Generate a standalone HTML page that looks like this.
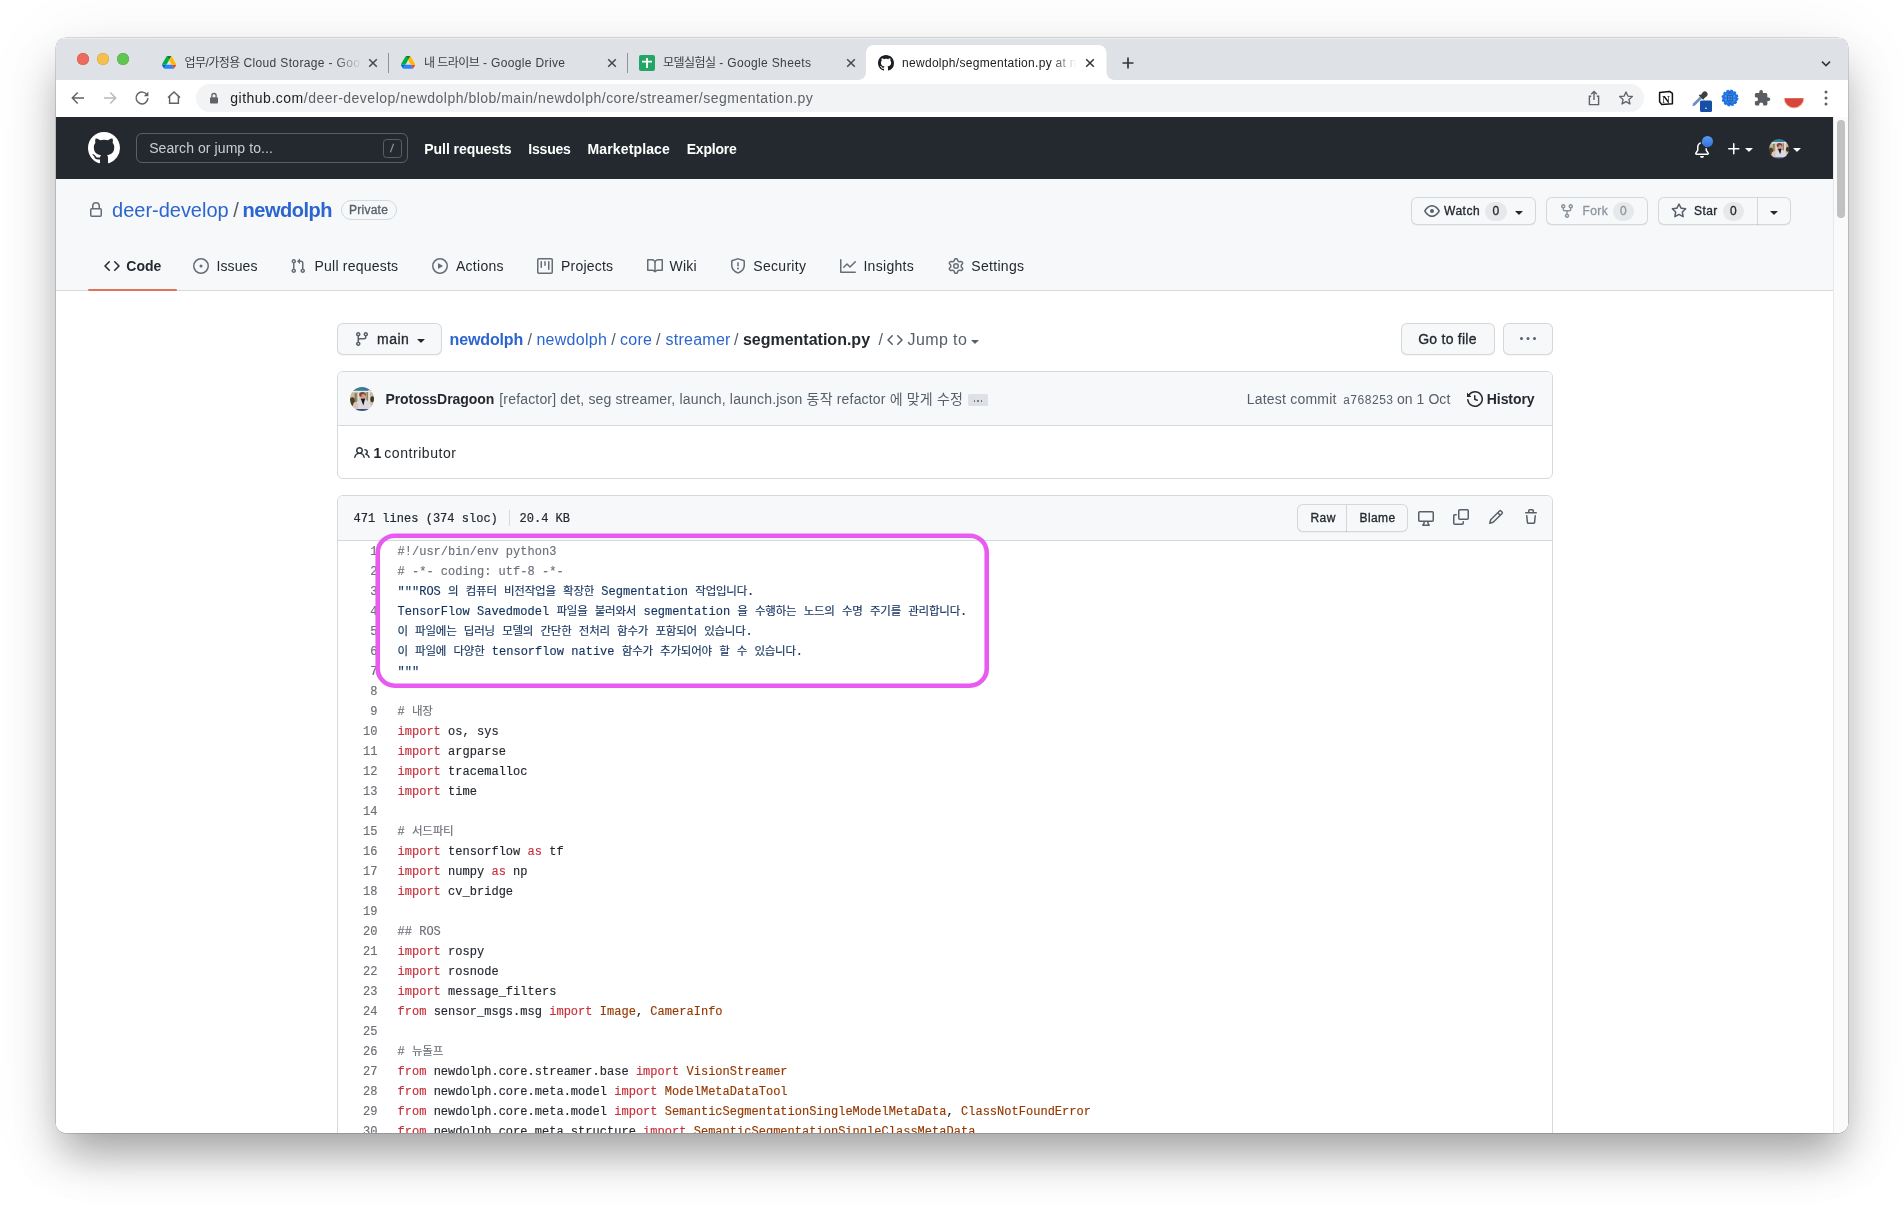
<!DOCTYPE html>
<html lang="ko"><head><meta charset="utf-8"><title>newdolph/segmentation.py at main</title>
<style>
html,body{margin:0;padding:0}
body{width:1904px;height:1207px;overflow:hidden;background:#fff;position:relative;font-family:"Liberation Sans","Noto Sans CJK KR",sans-serif}
.a{position:absolute;box-sizing:border-box;display:block}
.t{position:absolute;white-space:pre;line-height:20px;font-family:"Liberation Sans","Noto Sans CJK KR",sans-serif}
#win{position:absolute;left:56px;top:38px;width:1792px;height:1095px;border-radius:10px;overflow:hidden;background:#fff}
#shadow{position:absolute;left:56px;top:38px;width:1792px;height:1095px;border-radius:10px;
 box-shadow:0 0 0 .5px rgba(0,0,0,.28),0 26px 44px -6px rgba(0,0,0,.34),0 10px 80px rgba(0,0,0,.08)}
#abs{position:absolute;left:-56px;top:-38px;width:1904px;height:1207px;will-change:transform}
.ln{position:absolute;width:40px;text-align:right;font-family:"Liberation Mono","Noto Sans CJK KR",monospace;font-size:12px;line-height:20px;color:#6a6f76;white-space:pre;-webkit-text-stroke:.15px currentColor}
.cl{position:absolute;font-family:"Liberation Mono","Noto Sans CJK KR",monospace;font-size:12px;line-height:20px;color:#24292f;white-space:pre;letter-spacing:.022px;-webkit-text-stroke:.15px currentColor}
.h{font-size:11.5px;letter-spacing:-.22px}
.m{-webkit-text-stroke:.32px currentColor}
.k{color:#c7303c}.c{color:#6b7078}.s{color:#12315f}.v{color:#953800}
</style></head><body>
<div id="shadow"></div>
<div id="win"><div id="abs">

<div class="a" style="left:56px;top:38px;width:1792px;height:42px;background:#dee1e6;box-shadow:inset 0 1px 0 rgba(255,255,255,.45);"></div>
<div class="a" style="left:77px;top:53.2px;width:12px;height:12px;background:#ed6a5e;border-radius:6px;box-shadow:inset 0 0 0 .5px #d0574b;"></div>
<div class="a" style="left:97px;top:53.2px;width:12px;height:12px;background:#f4bf4f;border-radius:6px;box-shadow:inset 0 0 0 .5px #d6a243;"></div>
<div class="a" style="left:117px;top:53.2px;width:12px;height:12px;background:#61c554;border-radius:6px;box-shadow:inset 0 0 0 .5px #58a942;"></div>
<svg class="a" style="left:162px;top:56.3px;" width="14.2" height="12.8" viewBox="0 0 15 13.5"><path d="M1.1 11.6l.66 1.14c.14.24.34.43.57.57l2.36-4.09H0c0 .27.07.53.2.77z" fill="#0066da"/><path d="M7.5 4.33L5.14.24c-.23.14-.43.33-.57.57L.2 8.38c-.13.24-.2.5-.2.77h4.72z" fill="#00ac47"/><path d="M12.64 13.3c.23-.14.43-.33.57-.57l.27-.47 1.31-2.27c.14-.24.2-.5.2-.77h-4.72l1 1.97z" fill="#ea4335"/><path d="M7.5 4.33L9.86.24C9.63.1 9.36.03 9.08.03H5.92c-.28 0-.55.08-.78.21z" fill="#00832d"/><path d="M10.28 9.22H4.72L2.36 13.3c.23.14.5.21.78.21h8.72c.28 0 .55-.08.78-.21z" fill="#2684fc"/><path d="M12.61 4.58L10.43.81c-.14-.24-.34-.43-.57-.57L7.5 4.33l2.78 4.82h4.71c0-.27-.07-.53-.2-.77z" fill="#ffba00"/></svg>
<span class="t" style="left:184.5px;top:52.84px;font-size:12px;color:#3c4043;letter-spacing:0.36px;width:176px;overflow:hidden;-webkit-mask-image:linear-gradient(90deg,#000 150px,transparent 176px);mask-image:linear-gradient(90deg,#000 150px,transparent 176px);"><span style="letter-spacing:-.55px">업무/가정용</span> Cloud Storage - Goo</span>
<svg class="a" style="left:365px;top:55px;" width="16" height="16" viewBox="0 0 16 16"><path d="M4.2 4.2L11.8 11.8M11.8 4.2L4.2 11.8" stroke="#45494d" stroke-width="1.5" fill="none"/></svg>
<div class="a" style="left:388.2px;top:53px;width:1px;height:20px;background:#8f9296;"></div>
<svg class="a" style="left:400.5px;top:56.3px;" width="14.2" height="12.8" viewBox="0 0 15 13.5"><path d="M1.1 11.6l.66 1.14c.14.24.34.43.57.57l2.36-4.09H0c0 .27.07.53.2.77z" fill="#0066da"/><path d="M7.5 4.33L5.14.24c-.23.14-.43.33-.57.57L.2 8.38c-.13.24-.2.5-.2.77h4.72z" fill="#00ac47"/><path d="M12.64 13.3c.23-.14.43-.33.57-.57l.27-.47 1.31-2.27c.14-.24.2-.5.2-.77h-4.72l1 1.97z" fill="#ea4335"/><path d="M7.5 4.33L9.86.24C9.63.1 9.36.03 9.08.03H5.92c-.28 0-.55.08-.78.21z" fill="#00832d"/><path d="M10.28 9.22H4.72L2.36 13.3c.23.14.5.21.78.21h8.72c.28 0 .55-.08.78-.21z" fill="#2684fc"/><path d="M12.61 4.58L10.43.81c-.14-.24-.34-.43-.57-.57L7.5 4.33l2.78 4.82h4.71c0-.27-.07-.53-.2-.77z" fill="#ffba00"/></svg>
<span class="t" style="left:424px;top:52.84px;font-size:12px;color:#3c4043;letter-spacing:0.36px;"><span style="letter-spacing:-.55px">내 드라이브</span> - Google Drive</span>
<svg class="a" style="left:604px;top:55px;" width="16" height="16" viewBox="0 0 16 16"><path d="M4.2 4.2L11.8 11.8M11.8 4.2L4.2 11.8" stroke="#45494d" stroke-width="1.5" fill="none"/></svg>
<div class="a" style="left:627.2px;top:53px;width:1px;height:20px;background:#8f9296;"></div>
<svg class="a" style="left:639px;top:55px;" width="16" height="16" viewBox="0 0 16 16"><rect x="0" y="0" width="16" height="16" rx="2" fill="#23a566"/><path d="M3 6.6h10M8 3v10" stroke="#fff" stroke-width="1.8" fill="none"/><rect x="3" y="3" width="10" height="10" fill="none" stroke="#fff" stroke-width="0"/></svg>
<span class="t" style="left:663px;top:52.84px;font-size:12px;color:#3c4043;letter-spacing:0.36px;"><span style="letter-spacing:-.55px">모델실험실</span> - Google Sheets</span>
<svg class="a" style="left:843px;top:55px;" width="16" height="16" viewBox="0 0 16 16"><path d="M4.2 4.2L11.8 11.8M11.8 4.2L4.2 11.8" stroke="#45494d" stroke-width="1.5" fill="none"/></svg>
<svg class="a" style="left:858px;top:45px" width="256.5" height="35" viewBox="0 0 256.5 35"><path d="M0 35c4.4 0 8-3.6 8-8V8c0-4.4 3.6-8 8-8h224.5c4.4 0 8 3.6 8 8v19c0 4.4 3.6 8 8 8z" fill="#fff"/></svg>
<svg class="a" style="left:878px;top:55px" width="16" height="16" viewBox="0 0 16 16" ><path fill="#1b1f23" fill-rule="evenodd" d="M8 0C3.58 0 0 3.58 0 8c0 3.54 2.29 6.53 5.47 7.59.4.07.55-.17.55-.38 0-.19-.01-.82-.01-1.49-2.01.37-2.53-.49-2.69-.94-.09-.23-.48-.94-.82-1.13-.28-.15-.68-.52-.01-.53.63-.01 1.08.58 1.23.82.72 1.21 1.87.87 2.33.66.07-.52.28-.87.51-1.07-1.78-.2-3.64-.89-3.64-3.95 0-.87.31-1.59.82-2.15-.08-.2-.36-1.02.08-2.12 0 0 .67-.21 2.2.82.64-.18 1.32-.27 2-.27.68 0 1.36.09 2 .27 1.53-1.04 2.2-.82 2.2-.82.44 1.1.16 1.92.08 2.12.51.56.82 1.27.82 2.15 0 3.07-1.87 3.75-3.65 3.95.29.25.54.73.54 1.48 0 1.07-.01 1.93-.01 2.2 0 .21.15.46.55.38A8.013 8.013 0 0016 8c0-4.42-3.58-8-8-8z"/></svg>
<span class="t" style="left:902px;top:52.84px;font-size:12px;color:#202124;letter-spacing:0.3px;width:174px;overflow:hidden;-webkit-mask-image:linear-gradient(90deg,#000 150px,transparent 174px);mask-image:linear-gradient(90deg,#000 150px,transparent 174px);">newdolph/segmentation.py at m</span>
<svg class="a" style="left:1082px;top:55px;" width="16" height="16" viewBox="0 0 16 16"><path d="M4.2 4.2L11.8 11.8M11.8 4.2L4.2 11.8" stroke="#303438" stroke-width="1.5" fill="none"/></svg>
<svg class="a" style="left:1120px;top:55px;" width="16" height="16" viewBox="0 0 16 16"><path d="M8 2.5v11M2.5 8h11" stroke="#33373b" stroke-width="1.7" fill="none"/></svg>
<svg class="a" style="left:1818px;top:56px;" width="16" height="16" viewBox="0 0 16 16"><path d="M4 5.6l4 4 4-4" stroke="#33373b" stroke-width="1.6" fill="none"/></svg>
<div class="a" style="left:56px;top:80px;width:1792px;height:37px;background:#fff;"></div>
<svg class="a" style="left:68px;top:88px;" width="20" height="20" viewBox="0 0 20 20"><path d="M16 10H4.6M9.7 4.6L4.3 10l5.4 5.4" stroke="#5f6368" stroke-width="1.45" fill="none"/></svg>
<svg class="a" style="left:100px;top:88px;" width="20" height="20" viewBox="0 0 20 20"><path d="M4 10h11.4M10.3 4.6l5.4 5.4-5.4 5.4" stroke="#b6b9bd" stroke-width="1.45" fill="none"/></svg>
<svg class="a" style="left:132px;top:88px;" width="20" height="20" viewBox="0 0 20 20"><path d="M15.2 7.2A5.9 5.9 0 1 0 15.9 10" stroke="#5f6368" stroke-width="1.45" fill="none"/><path d="M16.4 3.6v4.6h-4.6z" fill="#5f6368"/></svg>
<svg class="a" style="left:164px;top:88px;" width="20" height="20" viewBox="0 0 20 20"><path d="M4 9.6L10 4l6 5.6M5.6 8.6v6.6h8.8V8.6" stroke="#5f6368" stroke-width="1.45" fill="none" stroke-linejoin="miter"/></svg>
<div class="a" style="left:196px;top:84px;width:1447.5px;height:28px;background:#f1f3f4;border-radius:14px;"></div>
<svg class="a" style="left:208px;top:91px;" width="12" height="14" viewBox="0 0 12 14"><rect x="2" y="6.2" width="8" height="6.4" rx="1" fill="#5f6368"/><path d="M3.9 6.5V4.6a2.1 2.1 0 0 1 4.2 0v1.9" stroke="#5f6368" stroke-width="1.3" fill="none"/></svg>
<span class="t" style="left:230.3px;top:87.75px;font-size:14px;color:#202124;letter-spacing:0.49px;">github.com</span>
<span class="t" style="left:303.8px;top:87.75px;font-size:14px;color:#5f6368;letter-spacing:0.49px;">/deer-develop/newdolph/blob/main/newdolph/core/streamer/segmentation.py</span>
<svg class="a" style="left:1585px;top:89px;" width="18" height="18" viewBox="0 0 18 18"><path d="M6.2 7.2H4.4v8.4h9.2V7.2h-1.8M9 11V2.6M6.2 5.2L9 2.4l2.8 2.8" stroke="#5f6368" stroke-width="1.4" fill="none"/></svg>
<svg class="a" style="left:1617px;top:89px;" width="18" height="18" viewBox="0 0 18 18"><path d="M9 2.9l1.85 4.15 4.5.45-3.400 3.050 1 4.400L9 12.650l-3.950 2.300 1-4.400-3.400-3.050 4.500-.450z" stroke="#5f6368" stroke-width="1.35" fill="none" stroke-linejoin="round"/></svg>
<svg class="a" style="left:1657px;top:89px;" width="18" height="18" viewBox="0 0 18 18"><path d="M2.6 3.4l10-1 2.8 2v10.4l-10.6.8-2.2-2.8z" fill="#fff" stroke="#111" stroke-width="1.5" stroke-linejoin="round"/><text x="5.2" y="13.6" font-family="Liberation Serif,serif" font-weight="700" font-size="10.5" fill="#111">N</text></svg>
<svg class="a" style="left:1690px;top:88px;" width="22" height="24" viewBox="0 0 22 24"><path d="M3 15.6l7-7 2 2-7 7-2.6.6z" fill="#6d8fc7"/><path d="M9.4 6.8l4.4 4.4M11 8.4l2.4-3.6a2 2 0 0 1 3 2.6L13 10z" stroke="#3c4043" stroke-width="1.8" fill="#3c4043"/><rect x="10" y="12.5" width="12" height="11.5" rx="1.5" fill="#174ea6"/><circle cx="16" cy="20.3" r=".8" fill="#fff"/></svg>
<svg class="a" style="left:1721px;top:89px;" width="18" height="18" viewBox="0 0 18 18"><circle cx="9" cy="9" r="7.6" fill="#1a73e8" stroke="#1a73e8" stroke-width="1.6" stroke-dasharray="2.4 1.6"/><circle cx="9" cy="9" r="5.6" fill="#4a90e2"/><path d="M3.4 9h11.2M9 3.4v11.2M5 5.6c2.4 1.4 5.6 1.4 8 0M5 12.4c2.4-1.4 5.6-1.4 8 0" stroke="#1a5fc4" stroke-width=".9" fill="none"/><ellipse cx="9" cy="9" rx="2.6" ry="5.6" stroke="#1a5fc4" stroke-width=".9" fill="none"/></svg>
<svg class="a" style="left:1753px;top:89px;" width="18" height="18" viewBox="0 0 18 18"><path d="M15.4 8.3h-1.1V5.4c0-.8-.7-1.5-1.500-1.500H9.900V2.800a1.800 1.800 0 0 0-3.600 0v1.100H3.400c-.8 0-1.500.7-1.500 1.500v2.800H3a2 2 0 0 1 0 4H1.900V15c0 .8.7 1.500 1.500 1.500h2.800v-1.100a2 2 0 0 1 4 0v1.100h2.700c.8 0 1.500-.7 1.500-1.500v-2.900h1.100a1.800 1.800 0 0 0 0-3.600z" fill="#5a5e63"/></svg>
<svg class="a" style="left:1783px;top:96.5px;" width="22" height="12" viewBox="0 0 22 12"><path d="M.6 1.200A10.400 10.400 0 0 0 21.400 1.200z" fill="#f0c9a8"/><path d="M1.600 1.200A9.400 9.400 0 0 0 20.400 1.200z" fill="#d9453c"/></svg>
<svg class="a" style="left:1822px;top:89px;" width="8" height="18" viewBox="0 0 8 18"><circle cx="4" cy="3" r="1.5" fill="#5f6368"/><circle cx="4" cy="9" r="1.5" fill="#5f6368"/><circle cx="4" cy="15" r="1.5" fill="#5f6368"/></svg>
<div class="a" style="left:56px;top:117px;width:1777px;height:62px;background:#24292f;"></div>
<svg class="a" style="left:88px;top:132px" width="32" height="32" viewBox="0 0 16 16" ><path fill="#fff" fill-rule="evenodd" d="M8 0C3.58 0 0 3.58 0 8c0 3.54 2.29 6.53 5.47 7.59.4.07.55-.17.55-.38 0-.19-.01-.82-.01-1.49-2.01.37-2.53-.49-2.69-.94-.09-.23-.48-.94-.82-1.13-.28-.15-.68-.52-.01-.53.63-.01 1.08.58 1.23.82.72 1.21 1.87.87 2.33.66.07-.52.28-.87.51-1.07-1.78-.2-3.64-.89-3.64-3.95 0-.87.31-1.59.82-2.15-.08-.2-.36-1.02.08-2.12 0 0 .67-.21 2.2.82.64-.18 1.32-.27 2-.27.68 0 1.36.09 2 .27 1.53-1.04 2.2-.82 2.2-.82.44 1.1.16 1.92.08 2.12.51.56.82 1.27.82 2.15 0 3.07-1.87 3.75-3.65 3.95.29.25.54.73.54 1.48 0 1.07-.01 1.93-.01 2.2 0 .21.15.46.55.38A8.013 8.013 0 0016 8c0-4.42-3.58-8-8-8z"/></svg>
<div class="a" style="left:136px;top:133px;width:272px;height:30px;border:1px solid #57606a;border-radius:6px;"></div>
<span class="t" style="left:149.2px;top:137.85px;font-size:14px;color:#c9ced4;letter-spacing:0.08px;">Search or jump to...</span>
<div class="a" style="left:382.5px;top:138.5px;width:19px;height:19px;border:1px solid #57606a;border-radius:3.5px;"></div>
<svg class="a" style="left:388px;top:142px;" width="8" height="12" viewBox="0 0 8 12"><path d="M5.6 1.800L2.400 10.200" stroke="#8c959f" stroke-width="1.1" fill="none"/></svg>
<span class="t" style="left:424.3px;top:139.05px;font-size:14px;color:#fff;font-weight:700;letter-spacing:-0.05px;">Pull requests</span>
<span class="t" style="left:528.3px;top:139.05px;font-size:14px;color:#fff;font-weight:700;letter-spacing:-0.2px;">Issues</span>
<span class="t" style="left:587.5px;top:139.05px;font-size:14px;color:#fff;font-weight:700;letter-spacing:0.14px;">Marketplace</span>
<span class="t" style="left:686.7px;top:139.05px;font-size:14px;color:#fff;font-weight:700;letter-spacing:-0.2px;">Explore</span>
<svg class="a" style="left:1694px;top:141.5px" width="16" height="16" viewBox="0 0 16 16" ><path fill="#fff" fill-rule="evenodd" d="M8 16a2 2 0 001.985-1.75c.017-.137-.097-.25-.235-.25h-3.5c-.138 0-.252.113-.235.25A2 2 0 008 16zM8 1.5A3.5 3.5 0 004.5 5v2.947c0 .346-.102.683-.294.97l-1.703 2.556a.018.018 0 00-.003.01l.001.006c0 .002.002.004.004.006a.017.017 0 00.006.004l.007.001h10.964l.007-.001a.016.016 0 00.006-.004.016.016 0 00.004-.006l.001-.007a.017.017 0 00-.003-.01l-1.703-2.554a1.75 1.75 0 01-.294-.97V5A3.5 3.5 0 008 1.5zM3 5a5 5 0 0110 0v2.947c0 .05.015.098.042.139l1.703 2.555A1.518 1.518 0 0113.482 13H2.518a1.518 1.518 0 01-1.263-2.36l1.703-2.554A.25.25 0 003 7.947V5z"/></svg>
<div class="a" style="left:1701.5px;top:135.5px;width:11px;height:11px;background:linear-gradient(#5b9af2,#2f74dc);border-radius:6px;box-shadow:0 0 0 1.5px #24292f;"></div>
<svg class="a" style="left:1726px;top:141px" width="16" height="16" viewBox="0 0 16 16" ><path fill="#fff" fill-rule="evenodd" d="M7.75 2a.75.75 0 01.75.75V7h4.25a.75.75 0 110 1.5H8.5v4.25a.75.75 0 11-1.5 0V8.5H2.75a.75.75 0 010-1.5H7V2.75A.75.75 0 017.75 2z"/></svg>
<svg class="a" style="left:1741px;top:141px" width="16" height="16" viewBox="0 0 16 16" ><path fill="#fff" fill-rule="evenodd" d="M4.427 7.427l3.396 3.396a.25.25 0 00.354 0l3.396-3.396A.25.25 0 0011.396 7H4.604a.25.25 0 00-.177.427z"/></svg>
<svg class="a" style="left:1768.7px;top:138.9px" width="20" height="20" viewBox="0 0 24 24"><defs><clipPath id="ca1"><circle cx="12" cy="12" r="12"/></clipPath><filter id="fa1" x="-10%" y="-10%" width="120%" height="120%"><feGaussianBlur stdDeviation=".55"/></filter><linearGradient id="ga1" x1="0" x2="1"><stop offset="0" stop-color="#3d8b86"/><stop offset="1" stop-color="#3a6aa6"/></linearGradient></defs><g clip-path="url(#ca1)"><g filter="url(#fa1)"><rect x="-2" y="-2" width="28" height="28" fill="#c9b9a4"/><rect x="-2" y="-2" width="28" height="6" fill="url(#ga1)"/><rect x="-2" y="3.8" width="28" height="1.4" fill="#e8ede9"/><rect x="4.600" y="6" width="2.200" height="9" fill="#8d7c60"/><rect x="8" y="5.500" width="1.400" height="8" fill="#e6dfd4"/><rect x="16.400" y="5" width="1.600" height="10" fill="#93836a"/><rect x="18.400" y="3" width="1.500" height="12" fill="#ebe7e2"/><ellipse cx="2.300" cy="14.500" rx="2.600" ry="4.200" fill="#4a4126"/><ellipse cx="22.300" cy="12.300" rx="2" ry="3" fill="#3d3824"/><ellipse cx="13" cy="20" rx="8.500" ry="7.500" fill="#dcd9de"/><ellipse cx="5.500" cy="19" rx="2.500" ry="4" fill="#d9c3bd"/><ellipse cx="12.500" cy="7.600" rx="3.300" ry="2.700" fill="#7b4533"/><ellipse cx="13.300" cy="9.400" rx="2" ry="2.300" fill="#de939b"/><path d="M10.800 11.800L15.200 11.600L14.200 15L13.400 18.400L12 15z" fill="#121212"/><rect x="6" y="22" width="14" height="3" fill="#3f4f78"/></g></g></svg>
<svg class="a" style="left:1789px;top:141px" width="16" height="16" viewBox="0 0 16 16" ><path fill="#fff" fill-rule="evenodd" d="M4.427 7.427l3.396 3.396a.25.25 0 00.354 0l3.396-3.396A.25.25 0 0011.396 7H4.604a.25.25 0 00-.177.427z"/></svg>
<div class="a" style="left:56px;top:179px;width:1777px;height:112px;background:#f6f8fa;border-bottom:1px solid #d4d9de;"></div>
<div class="a" style="left:56px;top:291px;width:1777px;height:900px;background:#fff;"></div>
<svg class="a" style="left:88px;top:202px" width="16" height="16" viewBox="0 0 16 16" ><path fill="#656d76" fill-rule="evenodd" d="M4 4v2h-.25A1.75 1.75 0 002 7.75v5.5c0 .966.784 1.75 1.75 1.75h8.5A1.75 1.75 0 0014 13.25v-5.5A1.75 1.75 0 0012.25 6H12V4a4 4 0 10-8 0zm6.5 2V4a2.5 2.5 0 00-5 0v2h5zM12 7.5h.25a.25.25 0 01.25.25v5.5a.25.25 0 01-.25.25h-8.5a.25.25 0 01-.25-.25v-5.5a.25.25 0 01.25-.25H12z"/></svg>
<span class="t" style="left:112.1px;top:200.17px;font-size:20px;color:#2b65cf;letter-spacing:-0.02px;">deer-develop</span>
<span class="t" style="left:233.2px;top:200.17px;font-size:20px;color:#57606a;">/</span>
<span class="t" style="left:242.6px;top:200.17px;font-size:20px;color:#2b65cf;font-weight:700;letter-spacing:-0.5px;">newdolph</span>
<div class="a" style="left:341px;top:200px;width:55.5px;height:20px;border:1px solid #d4d9de;border-radius:10px;"></div>
<span class="t m" style="left:349px;top:200.14px;font-size:12px;color:#57606a;letter-spacing:0.25px;">Private</span>
<div class="a" style="left:1411px;top:197px;width:124.5px;height:28px;background:#f6f8fa;border:1px solid rgba(27,31,36,.15);border-radius:6px;box-shadow:0 1px 0 rgba(27,31,36,.04);"></div>
<svg class="a" style="left:1424px;top:203px" width="16" height="16" viewBox="0 0 16 16" ><path fill="#57606a" fill-rule="evenodd" d="M1.679 7.932c.412-.621 1.242-1.75 2.366-2.717C5.175 4.242 6.527 3.5 8 3.5c1.473 0 2.824.742 3.955 1.715 1.124.967 1.954 2.096 2.366 2.717a.119.119 0 010 .136c-.412.621-1.242 1.75-2.366 2.717C10.825 11.758 9.473 12.5 8 12.5c-1.473 0-2.824-.742-3.955-1.715C2.92 9.818 2.09 8.69 1.679 8.068a.119.119 0 010-.136zM8 2c-1.981 0-3.67.992-4.933 2.078C1.797 5.169.88 6.423.43 7.1a1.619 1.619 0 000 1.798c.45.678 1.367 1.932 2.637 3.024C4.329 13.008 6.019 14 8 14c1.981 0 3.67-.992 4.933-2.078 1.27-1.091 2.187-2.345 2.637-3.023a1.619 1.619 0 000-1.798c-.45-.678-1.367-1.932-2.637-3.023C11.671 2.992 9.981 2 8 2zm0 8a2 2 0 100-4 2 2 0 000 4z"/></svg>
<span class="t m" style="left:1444px;top:201.14px;font-size:12px;color:#24292f;letter-spacing:0.5px;">Watch</span>
<div class="a" style="left:1485.0px;top:201.5px;width:21.5px;height:19.5px;background:rgba(120,126,134,.13);border-radius:10px;"></div>
<span class="t m" style="left:1492.4px;top:201.04px;font-size:12px;color:#24292f;">0</span>
<svg class="a" style="left:1511px;top:203.5px" width="16" height="16" viewBox="0 0 16 16" ><path fill="#24292f" fill-rule="evenodd" d="M4.427 7.427l3.396 3.396a.25.25 0 00.354 0l3.396-3.396A.25.25 0 0011.396 7H4.604a.25.25 0 00-.177.427z"/></svg>
<div class="a" style="left:1546px;top:197px;width:101.5px;height:28px;background:#f6f8fa;border:1px solid rgba(27,31,36,.15);border-radius:6px;box-shadow:0 1px 0 rgba(27,31,36,.04);"></div>
<svg class="a" style="left:1558.5px;top:203px" width="16" height="16" viewBox="0 0 16 16" ><path fill="#8c959f" fill-rule="evenodd" d="M5 3.25a.75.75 0 11-1.5 0 .75.75 0 011.5 0zm0 2.122a2.25 2.25 0 10-1.5 0v.878A2.25 2.25 0 005.75 8.5h1.5v2.128a2.251 2.251 0 101.5 0V8.5h1.5a2.25 2.25 0 002.25-2.25v-.878a2.25 2.25 0 10-1.5 0v.878a.75.75 0 01-.75.75h-4.5A.75.75 0 015 6.25v-.878zm3.75 7.378a.75.75 0 11-1.5 0 .75.75 0 011.5 0zm3-8.75a.75.75 0 100-1.5.75.75 0 000 1.5z"/></svg>
<span class="t m" style="left:1582.4px;top:201.14px;font-size:12px;color:#8c959f;letter-spacing:0.45px;">Fork</span>
<div class="a" style="left:1612.5px;top:201.5px;width:21.5px;height:19.5px;background:rgba(120,126,134,.13);border-radius:10px;"></div>
<span class="t m" style="left:1619.9px;top:201.04px;font-size:12px;color:#8c959f;">0</span>
<div class="a" style="left:1658px;top:197px;width:132.5px;height:28px;background:#f6f8fa;border:1px solid rgba(27,31,36,.15);border-radius:6px;box-shadow:0 1px 0 rgba(27,31,36,.04);"></div>
<div class="a" style="left:1757px;top:197.5px;width:1px;height:27px;background:rgba(27,31,36,.15);"></div>
<svg class="a" style="left:1671px;top:203px" width="16" height="16" viewBox="0 0 16 16" ><path fill="#57606a" fill-rule="evenodd" d="M8 .25a.75.75 0 01.673.418l1.882 3.815 4.21.612a.75.75 0 01.416 1.279l-3.046 2.97.719 4.192a.75.75 0 01-1.088.791L8 12.347l-3.766 1.98a.75.75 0 01-1.088-.79l.72-4.194L.818 6.374a.75.75 0 01.416-1.28l4.21-.611L7.327.668A.75.75 0 018 .25zm0 2.445L6.615 5.5a.75.75 0 01-.564.41l-3.097.45 2.24 2.184a.75.75 0 01.216.664l-.528 3.084 2.769-1.456a.75.75 0 01.698 0l2.77 1.456-.53-3.084a.75.75 0 01.216-.664l2.24-2.183-3.096-.45a.75.75 0 01-.564-.41L8 2.694v.001z"/></svg>
<span class="t m" style="left:1694px;top:201.14px;font-size:12px;color:#24292f;letter-spacing:0.45px;">Star</span>
<div class="a" style="left:1722.5px;top:201.5px;width:21.5px;height:19.5px;background:rgba(120,126,134,.13);border-radius:10px;"></div>
<span class="t m" style="left:1729.9px;top:201.04px;font-size:12px;color:#24292f;">0</span>
<svg class="a" style="left:1766px;top:203.5px" width="16" height="16" viewBox="0 0 16 16" ><path fill="#24292f" fill-rule="evenodd" d="M4.427 7.427l3.396 3.396a.25.25 0 00.354 0l3.396-3.396A.25.25 0 0011.396 7H4.604a.25.25 0 00-.177.427z"/></svg>
<svg class="a" style="left:104px;top:258px" width="16" height="16" viewBox="0 0 16 16" ><path fill="#24292f" fill-rule="evenodd" d="M4.72 3.22a.75.75 0 011.06 1.06L2.06 8l3.72 3.72a.75.75 0 11-1.06 1.06L.47 8.53a.75.75 0 010-1.06l4.25-4.25zm6.56 0a.75.75 0 10-1.06 1.06L13.94 8l-3.72 3.72a.75.75 0 101.06 1.06l4.25-4.25a.75.75 0 000-1.06l-4.25-4.25z"/></svg>
<span class="t" style="left:126.3px;top:255.75px;font-size:14px;color:#24292f;font-weight:700;letter-spacing:0.0px;">Code</span>
<svg class="a" style="left:193px;top:258px" width="16" height="16" viewBox="0 0 16 16" ><path fill="#656d76" fill-rule="evenodd" d="M8 9.5a1.5 1.5 0 100-3 1.5 1.5 0 000 3zM8 0a8 8 0 100 16A8 8 0 008 0zM1.5 8a6.5 6.5 0 1113 0 6.5 6.5 0 01-13 0z"/></svg>
<span class="t" style="left:216.5px;top:255.75px;font-size:14px;color:#24292f;letter-spacing:0.1px;">Issues</span>
<svg class="a" style="left:290px;top:258px" width="16" height="16" viewBox="0 0 16 16" ><path fill="#656d76" fill-rule="evenodd" d="M7.177 3.073L9.573.677A.25.25 0 0110 .854v4.792a.25.25 0 01-.427.177L7.177 3.427a.25.25 0 010-.354zM3.75 2.5a.75.75 0 100 1.5.75.75 0 000-1.5zm-2.25.75a2.25 2.25 0 113 2.122v5.256a2.251 2.251 0 11-1.5 0V5.372A2.25 2.25 0 011.5 3.25zM11 2.5h-1V4h1a1 1 0 011 1v5.628a2.251 2.251 0 101.5 0V5A2.5 2.5 0 0011 2.5zm1 10.25a.75.75 0 111.5 0 .75.75 0 01-1.5 0zM3.75 12a.75.75 0 100 1.5.75.75 0 000-1.5z"/></svg>
<span class="t" style="left:314.5px;top:255.75px;font-size:14px;color:#24292f;letter-spacing:0.22px;">Pull requests</span>
<svg class="a" style="left:432px;top:258px" width="16" height="16" viewBox="0 0 16 16" ><path fill="#656d76" fill-rule="evenodd" d="M1.5 8a6.5 6.5 0 1113 0 6.5 6.5 0 01-13 0zM8 0a8 8 0 100 16A8 8 0 008 0zM6.379 5.227A.25.25 0 006 5.442v5.117a.25.25 0 00.379.214l4.264-2.559a.25.25 0 000-.428L6.379 5.227z"/></svg>
<span class="t" style="left:455.9px;top:255.75px;font-size:14px;color:#24292f;letter-spacing:0.3px;">Actions</span>
<svg class="a" style="left:537px;top:258px" width="16" height="16" viewBox="0 0 16 16" ><path fill="#656d76" fill-rule="evenodd" d="M1.75 0A1.75 1.75 0 000 1.75v12.5C0 15.216.784 16 1.75 16h12.5A1.75 1.75 0 0016 14.25V1.75A1.75 1.75 0 0014.25 0H1.75zM1.5 1.75a.25.25 0 01.25-.25h12.5a.25.25 0 01.25.25v12.5a.25.25 0 01-.25.25H1.75a.25.25 0 01-.25-.25V1.75zM11.75 3a.75.75 0 00-.75.75v7.5a.75.75 0 001.5 0v-7.5a.75.75 0 00-.75-.75zm-8.25.75a.75.75 0 011.5 0v5.5a.75.75 0 01-1.5 0v-5.5zM8 3a.75.75 0 00-.75.75v3.5a.75.75 0 001.5 0v-3.5A.75.75 0 008 3z"/></svg>
<span class="t" style="left:561px;top:255.75px;font-size:14px;color:#24292f;letter-spacing:0.22px;">Projects</span>
<svg class="a" style="left:646.5px;top:258px" width="16" height="16" viewBox="0 0 16 16" ><path fill="#656d76" fill-rule="evenodd" d="M0 1.75A.75.75 0 01.75 1h4.253c1.227 0 2.317.59 3 1.501A3.744 3.744 0 0111.006 1h4.245a.75.75 0 01.75.75v10.5a.75.75 0 01-.75.75h-4.507a2.25 2.25 0 00-1.591.659l-.622.621a.75.75 0 01-1.06 0l-.622-.621A2.25 2.25 0 005.258 13H.75a.75.75 0 01-.75-.75V1.75zm8.755 3a2.25 2.25 0 012.25-2.25H14.5v9h-3.757c-.71 0-1.4.201-1.992.572l.004-7.322zm-1.504 7.324l.004-5.073-.002-2.253A2.25 2.25 0 005.003 2.5H1.5v9h3.757a3.75 3.75 0 011.994.574z"/></svg>
<span class="t" style="left:669.6px;top:255.75px;font-size:14px;color:#24292f;letter-spacing:0.2px;">Wiki</span>
<svg class="a" style="left:730px;top:258px" width="16" height="16" viewBox="0 0 16 16" ><path fill="#656d76" fill-rule="evenodd" d="M7.467.133a1.75 1.75 0 011.066 0l5.25 1.68A1.75 1.75 0 0115 3.48V7c0 1.566-.32 3.182-1.303 4.682-.983 1.498-2.585 2.813-5.032 3.855a1.7 1.7 0 01-1.33 0c-2.447-1.042-4.049-2.357-5.032-3.855C1.32 10.182 1 8.566 1 7V3.48a1.75 1.75 0 011.217-1.667l5.25-1.68zm.61 1.429a.25.25 0 00-.153 0l-5.25 1.68a.25.25 0 00-.174.238V7c0 1.358.275 2.666 1.057 3.86.784 1.194 2.121 2.34 4.366 3.297a.2.2 0 00.154 0c2.245-.956 3.582-2.104 4.366-3.298C13.225 9.666 13.5 8.36 13.5 7V3.48a.25.25 0 00-.174-.237l-5.25-1.68zM9 10.5a1 1 0 11-2 0 1 1 0 012 0zm-.25-5.75a.75.75 0 10-1.5 0v3a.75.75 0 001.5 0v-3z"/></svg>
<span class="t" style="left:753.3px;top:255.75px;font-size:14px;color:#24292f;letter-spacing:0.3px;">Security</span>
<svg class="a" style="left:839.5px;top:258px" width="16" height="16" viewBox="0 0 16 16" ><path fill="#656d76" fill-rule="evenodd" d="M1.5 1.75a.75.75 0 00-1.5 0v12.5c0 .414.336.75.75.75h14.5a.75.75 0 000-1.5H1.5V1.75zm14.28 2.53a.75.75 0 00-1.06-1.06L10 7.94 7.53 5.47a.75.75 0 00-1.06 0L3.22 8.72a.75.75 0 001.06 1.06L7 7.06l2.47 2.47a.75.75 0 001.06 0l5.25-5.25z"/></svg>
<span class="t" style="left:863.4px;top:255.75px;font-size:14px;color:#24292f;letter-spacing:0.3px;">Insights</span>
<svg class="a" style="left:947.5px;top:258px" width="16" height="16" viewBox="0 0 16 16" ><path fill="#656d76" fill-rule="evenodd" d="M7.429 1.525a6.593 6.593 0 011.142 0c.036.003.108.036.137.146l.289 1.105c.147.56.55.967.997 1.189.174.086.341.183.501.29.417.278.97.423 1.53.27l1.102-.303c.11-.03.175.016.195.046.219.31.41.641.573.989.014.031.022.11-.059.19l-.815.806c-.411.406-.562.957-.53 1.456a4.588 4.588 0 010 .582c-.032.499.119 1.05.53 1.456l.815.806c.08.08.073.159.059.19a6.494 6.494 0 01-.573.99c-.02.029-.086.074-.195.045l-1.103-.303c-.559-.153-1.112-.008-1.529.27-.16.107-.327.204-.5.29-.449.222-.851.628-.998 1.189l-.289 1.105c-.029.11-.101.143-.137.146a6.613 6.613 0 01-1.142 0c-.036-.003-.108-.037-.137-.146l-.289-1.105c-.147-.56-.55-.967-.997-1.189a4.502 4.502 0 01-.501-.29c-.417-.278-.97-.423-1.53-.27l-1.102.303c-.11.03-.175-.016-.195-.046a6.492 6.492 0 01-.573-.989c-.014-.031-.022-.11.059-.19l.815-.806c.411-.406.562-.957.53-1.456a4.587 4.587 0 010-.582c.032-.499-.119-1.05-.53-1.456l-.815-.806c-.08-.08-.073-.159-.059-.19a6.44 6.44 0 01.573-.99c.02-.029.086-.075.195-.045l1.103.303c.559.153 1.112.008 1.529-.27.16-.107.327-.204.5-.29.449-.222.851-.628.998-1.189l.289-1.105c.029-.11.101-.143.137-.146zM8 0c-.236 0-.47.01-.701.03-.743.065-1.29.615-1.458 1.261l-.29 1.106c-.017.066-.078.158-.211.224a5.994 5.994 0 00-.668.386c-.123.082-.233.09-.3.071L3.27 2.776c-.644-.177-1.392.02-1.82.63a7.977 7.977 0 00-.704 1.217c-.315.675-.111 1.422.363 1.891l.815.806c.05.048.098.147.088.294a6.084 6.084 0 000 .772c.01.147-.038.246-.088.294l-.815.806c-.474.469-.678 1.216-.363 1.891.2.428.436.835.704 1.218.428.609 1.176.806 1.82.63l1.103-.303c.066-.019.176-.011.299.071.213.143.436.272.668.386.133.066.194.158.212.224l.289 1.106c.169.646.715 1.196 1.458 1.26a8.094 8.094 0 001.402 0c.743-.064 1.29-.614 1.458-1.26l.29-1.106c.017-.066.078-.158.211-.224a5.98 5.98 0 00.668-.386c.123-.082.233-.09.3-.071l1.102.302c.644.177 1.392-.02 1.82-.63.268-.382.505-.789.704-1.217.315-.675.111-1.422-.364-1.891l-.814-.806c-.05-.048-.098-.147-.088-.294a6.1 6.1 0 000-.772c-.01-.147.039-.246.088-.294l.814-.806c.475-.469.679-1.216.364-1.891a7.992 7.992 0 00-.704-1.218c-.428-.609-1.176-.806-1.82-.63l-1.103.303c-.066.019-.176.011-.299-.071a5.991 5.991 0 00-.668-.386c-.133-.066-.194-.158-.212-.224L10.16 1.29C9.99.645 9.444.095 8.701.031A8.094 8.094 0 008 0zm1.5 8a1.5 1.5 0 11-3 0 1.5 1.5 0 013 0zM11 8a3 3 0 11-6 0 3 3 0 016 0z"/></svg>
<span class="t" style="left:971.3px;top:255.75px;font-size:14px;color:#24292f;letter-spacing:0.3px;">Settings</span>
<div class="a" style="left:88px;top:288.7px;width:89px;height:2.3px;background:#e0745a;border-radius:1px;"></div>
<div class="a" style="left:337px;top:323px;width:104.5px;height:32px;background:#f6f8fa;border:1px solid rgba(27,31,36,.15);border-radius:6px;box-shadow:0 1px 0 rgba(27,31,36,.04);"></div>
<svg class="a" style="left:354px;top:331px" width="16" height="16" viewBox="0 0 16 16" ><path fill="#57606a" fill-rule="evenodd" d="M11.75 2.5a.75.75 0 100 1.5.75.75 0 000-1.5zm-2.25.75a2.25 2.25 0 113 2.122V6A2.5 2.5 0 0110 8.5H6a1 1 0 00-1 1v1.128a2.251 2.251 0 11-1.5 0V5.372a2.25 2.25 0 111.5 0v1.836A2.492 2.492 0 016 7h4a1 1 0 001-1v-.628A2.25 2.25 0 019.5 3.25zM4.25 12a.75.75 0 100 1.5.75.75 0 000-1.5zM3.5 3.25a.75.75 0 111.5 0 .75.75 0 01-1.5 0z"/></svg>
<span class="t m" style="left:377px;top:329.35px;font-size:14px;color:#24292f;letter-spacing:0.5px;">main</span>
<svg class="a" style="left:413px;top:331.5px" width="16" height="16" viewBox="0 0 16 16" ><path fill="#24292f" fill-rule="evenodd" d="M4.427 7.427l3.396 3.396a.25.25 0 00.354 0l3.396-3.396A.25.25 0 0011.396 7H4.604a.25.25 0 00-.177.427z"/></svg>
<span class="t" style="left:449.6px;top:330.06px;font-size:16px;color:#2b65cf;font-weight:700;letter-spacing:-0.15px;">newdolph</span>
<span class="t" style="left:527.5px;top:330.06px;font-size:16px;color:#57606a;">/</span>
<span class="t" style="left:536.4px;top:330.06px;font-size:16px;color:#2b65cf;letter-spacing:0.27px;">newdolph</span>
<span class="t" style="left:611.3px;top:330.06px;font-size:16px;color:#57606a;">/</span>
<span class="t" style="left:620px;top:330.06px;font-size:16px;color:#2b65cf;letter-spacing:0.27px;">core</span>
<span class="t" style="left:655.9px;top:330.06px;font-size:16px;color:#57606a;">/</span>
<span class="t" style="left:665.4px;top:330.06px;font-size:16px;color:#2b65cf;letter-spacing:0.27px;">streamer</span>
<span class="t" style="left:733.9px;top:330.06px;font-size:16px;color:#57606a;">/</span>
<span class="t" style="left:742.9px;top:330.06px;font-size:16px;color:#24292f;font-weight:700;letter-spacing:0.0px;">segmentation.py</span>
<span class="t" style="left:878.5px;top:330.06px;font-size:16px;color:#57606a;">/</span>
<svg class="a" style="left:887px;top:332px" width="16" height="16" viewBox="0 0 16 16" ><path fill="#57606a" fill-rule="evenodd" d="M4.72 3.22a.75.75 0 011.06 1.06L2.06 8l3.72 3.72a.75.75 0 11-1.06 1.06L.47 8.53a.75.75 0 010-1.06l4.25-4.25zm6.56 0a.75.75 0 10-1.06 1.06L13.94 8l-3.72 3.72a.75.75 0 101.06 1.06l4.25-4.25a.75.75 0 000-1.06l-4.25-4.25z"/></svg>
<span class="t" style="left:907.5px;top:330.06px;font-size:16px;color:#57606a;letter-spacing:0.4px;">Jump to</span>
<svg class="a" style="left:967px;top:332.5px" width="16" height="16" viewBox="0 0 16 16" ><path fill="#57606a" fill-rule="evenodd" d="M4.427 7.427l3.396 3.396a.25.25 0 00.354 0l3.396-3.396A.25.25 0 0011.396 7H4.604a.25.25 0 00-.177.427z"/></svg>
<div class="a" style="left:1401px;top:323px;width:94px;height:32px;background:#f6f8fa;border:1px solid rgba(27,31,36,.15);border-radius:6px;box-shadow:0 1px 0 rgba(27,31,36,.04);"></div>
<span class="t m" style="left:1418.2px;top:329.35px;font-size:14px;color:#24292f;letter-spacing:0.25px;">Go to file</span>
<div class="a" style="left:1503px;top:323px;width:50px;height:32px;background:#f6f8fa;border:1px solid rgba(27,31,36,.15);border-radius:6px;box-shadow:0 1px 0 rgba(27,31,36,.04);"></div>
<svg class="a" style="left:1520px;top:331px" width="16" height="16" viewBox="0 0 16 16" ><path fill="#57606a" fill-rule="evenodd" d="M8 9a1.5 1.5 0 100-3 1.5 1.5 0 000 3zM1.5 9a1.5 1.5 0 100-3 1.5 1.5 0 000 3zm13 0a1.5 1.5 0 100-3 1.5 1.5 0 000 3z"/></svg>
<div class="a" style="left:337px;top:371px;width:1216px;height:108px;background:#fff;border:1px solid #d4d9de;border-radius:6px;"></div>
<div class="a" style="left:338px;top:372px;width:1214px;height:53px;background:#f6f8fa;border-radius:5px;border-bottom-left-radius:0;border-bottom-right-radius:0;"></div>
<div class="a" style="left:338px;top:425px;width:1214px;height:1px;background:#d4d9de;"></div>
<svg class="a" style="left:350px;top:387px" width="24" height="24" viewBox="0 0 24 24"><defs><clipPath id="ca2"><circle cx="12" cy="12" r="12"/></clipPath><filter id="fa2" x="-10%" y="-10%" width="120%" height="120%"><feGaussianBlur stdDeviation=".55"/></filter><linearGradient id="ga2" x1="0" x2="1"><stop offset="0" stop-color="#3d8b86"/><stop offset="1" stop-color="#3a6aa6"/></linearGradient></defs><g clip-path="url(#ca2)"><g filter="url(#fa2)"><rect x="-2" y="-2" width="28" height="28" fill="#c9b9a4"/><rect x="-2" y="-2" width="28" height="6" fill="url(#ga2)"/><rect x="-2" y="3.8" width="28" height="1.4" fill="#e8ede9"/><rect x="4.600" y="6" width="2.200" height="9" fill="#8d7c60"/><rect x="8" y="5.500" width="1.400" height="8" fill="#e6dfd4"/><rect x="16.400" y="5" width="1.600" height="10" fill="#93836a"/><rect x="18.400" y="3" width="1.500" height="12" fill="#ebe7e2"/><ellipse cx="2.300" cy="14.500" rx="2.600" ry="4.200" fill="#4a4126"/><ellipse cx="22.300" cy="12.300" rx="2" ry="3" fill="#3d3824"/><ellipse cx="13" cy="20" rx="8.500" ry="7.500" fill="#dcd9de"/><ellipse cx="5.500" cy="19" rx="2.500" ry="4" fill="#d9c3bd"/><ellipse cx="12.500" cy="7.600" rx="3.300" ry="2.700" fill="#7b4533"/><ellipse cx="13.300" cy="9.400" rx="2" ry="2.300" fill="#de939b"/><path d="M10.800 11.800L15.200 11.600L14.200 15L13.400 18.400L12 15z" fill="#121212"/><rect x="6" y="22" width="14" height="3" fill="#3f4f78"/></g></g></svg>
<span class="t" style="left:385.4px;top:388.95px;font-size:14px;color:#24292f;font-weight:700;letter-spacing:-0.06px;">ProtossDragoon</span>
<span class="t" style="left:499.3px;top:388.95px;font-size:14px;color:#57606a;letter-spacing:0.17px;">[refactor] det, seg streamer, launch, launch.json 동작 refactor 에 맞게 수정</span>
<div class="a" style="left:968px;top:394px;width:19.5px;height:11.5px;background:#dde1e6;border-radius:1.5px;"></div>
<div class="a" style="left:973.7px;top:400.3px;width:1.8px;height:1.8px;background:#57606a;border-radius:1px;"></div>
<div class="a" style="left:977.2px;top:400.3px;width:1.8px;height:1.8px;background:#57606a;border-radius:1px;"></div>
<div class="a" style="left:980.7px;top:400.3px;width:1.8px;height:1.8px;background:#57606a;border-radius:1px;"></div>
<span class="t" style="left:1246.8px;top:388.95px;font-size:14px;color:#57606a;letter-spacing:0.2px;">Latest commit</span>
<span class="t" style="left:1342.9px;top:390.60px;font-size:12px;color:#57606a;font-family:'Liberation Mono','Noto Sans CJK KR',monospace;">a768253</span>
<span class="t" style="left:1397.0px;top:388.95px;font-size:14px;color:#57606a;letter-spacing:0.05px;">on 1 Oct</span>
<svg class="a" style="left:1467px;top:391px" width="16" height="16" viewBox="0 0 16 16" ><path fill="#24292f" fill-rule="evenodd" d="M1.643 3.143L.427 1.927A.25.25 0 000 2.104V5.75c0 .138.112.25.25.25h3.646a.25.25 0 00.177-.427L2.715 4.215a6.5 6.5 0 11-1.18 4.458.75.75 0 10-1.493.154 8.001 8.001 0 101.6-5.684zM7.75 4a.75.75 0 01.75.75v2.992l2.028.812a.75.75 0 01-.557 1.392l-2.5-1A.75.75 0 017 8.25v-3.5A.75.75 0 017.75 4z"/></svg>
<span class="t" style="left:1486.8px;top:388.95px;font-size:14px;color:#24292f;font-weight:700;letter-spacing:-0.08px;">History</span>
<svg class="a" style="left:354px;top:445px" width="16" height="16" viewBox="0 0 16 16" ><path fill="#2f353c" fill-rule="evenodd" d="M5.5 3.5a2 2 0 100 4 2 2 0 000-4zM2 5.5a3.5 3.5 0 115.898 2.549 5.507 5.507 0 013.034 4.084.75.75 0 11-1.482.235 4.001 4.001 0 00-7.9 0 .75.75 0 01-1.482-.236A5.507 5.507 0 013.102 8.05 3.49 3.49 0 012 5.5zM11 4a.75.75 0 100 1.5 1.5 1.5 0 01.666 2.844.75.75 0 00-.416.672v.352a.75.75 0 00.574.73c1.2.289 2.162 1.2 2.522 2.372a.75.75 0 101.434-.44 5.01 5.01 0 00-2.56-3.012A3 3 0 0011 4z"/></svg>
<span class="t" style="left:373.6px;top:442.55px;font-size:14px;color:#24292f;font-weight:700;">1</span>
<span class="t" style="left:384.3px;top:442.55px;font-size:14px;color:#24292f;letter-spacing:0.55px;">contributor</span>
<div class="a" style="left:337px;top:495px;width:1216px;height:700px;background:#fff;border:1px solid #d4d9de;border-radius:6px;"></div>
<div class="a" style="left:338px;top:496px;width:1214px;height:44px;background:#f6f8fa;border-radius:5px;border-bottom-left-radius:0;border-bottom-right-radius:0;"></div>
<div class="a" style="left:338px;top:540px;width:1214px;height:1px;background:#d4d9de;"></div>
<span class="t" style="left:353.5px;top:509.10px;font-size:12px;color:#24292f;letter-spacing:0.015px;font-family:'Liberation Mono','Noto Sans CJK KR',monospace;-webkit-text-stroke:.2px currentColor;">471 lines (374 sloc)</span>
<div class="a" style="left:508.5px;top:510px;width:1px;height:16px;background:#d4d9de;"></div>
<span class="t" style="left:519.5px;top:509.10px;font-size:12px;color:#24292f;letter-spacing:0.015px;font-family:'Liberation Mono','Noto Sans CJK KR',monospace;-webkit-text-stroke:.2px currentColor;">20.4 KB</span>
<div class="a" style="left:1297px;top:504px;width:110.5px;height:28px;background:#f6f8fa;border:1px solid rgba(27,31,36,.15);border-radius:6px;box-shadow:0 1px 0 rgba(27,31,36,.04);"></div>
<div class="a" style="left:1346px;top:504.5px;width:1px;height:27px;background:rgba(27,31,36,.15);"></div>
<span class="t m" style="left:1310.5px;top:508.14px;font-size:12px;color:#24292f;letter-spacing:0.4px;">Raw</span>
<span class="t m" style="left:1359.5px;top:508.14px;font-size:12px;color:#24292f;letter-spacing:0.4px;">Blame</span>
<svg class="a" style="left:1418px;top:509.5px" width="16" height="16" viewBox="0 0 16 16" ><path fill="#57606a" fill-rule="evenodd" d="M1.75 2.5h12.5a.25.25 0 01.25.25v7.5a.25.25 0 01-.25.25H1.75a.25.25 0 01-.25-.25v-7.5a.25.25 0 01.25-.25zM14.25 1H1.75A1.75 1.75 0 000 2.75v7.5C0 11.216.784 12 1.75 12h3.727c-.1 1.041-.52 1.872-1.292 2.757A.75.75 0 004.75 16h6.5a.75.75 0 00.565-1.243c-.772-.885-1.193-1.716-1.292-2.757h3.727A1.75 1.75 0 0016 10.25v-7.5A1.75 1.75 0 0014.25 1zM9.018 12H6.982a5.72 5.72 0 01-.765 2.5h3.566a5.72 5.72 0 01-.765-2.5z"/></svg>
<svg class="a" style="left:1453px;top:509px" width="16" height="16" viewBox="0 0 16 16" ><path fill="#57606a" fill-rule="evenodd" d="M0 6.75C0 5.784.784 5 1.75 5h1.5a.75.75 0 010 1.5h-1.5a.25.25 0 00-.25.25v7.5c0 .138.112.25.25.25h7.5a.25.25 0 00.25-.25v-1.5a.75.75 0 011.5 0v1.5A1.75 1.75 0 019.25 16h-7.5A1.75 1.75 0 010 14.25v-7.5zM5 1.75C5 .784 5.784 0 6.75 0h7.5C15.216 0 16 .784 16 1.75v7.5A1.75 1.75 0 0114.25 11h-7.5A1.75 1.75 0 015 9.25v-7.5zm1.75-.25a.25.25 0 00-.25.25v7.5c0 .138.112.25.25.25h7.5a.25.25 0 00.25-.25v-7.5a.25.25 0 00-.25-.25h-7.5z"/></svg>
<svg class="a" style="left:1488px;top:509px" width="16" height="16" viewBox="0 0 16 16" ><path fill="#57606a" fill-rule="evenodd" d="M11.013 1.427a1.75 1.75 0 012.474 0l1.086 1.086a1.75 1.75 0 010 2.474l-8.61 8.61c-.21.21-.47.364-.756.445l-3.251.93a.75.75 0 01-.927-.928l.929-3.25a1.75 1.75 0 01.445-.758l8.61-8.61zm1.414 1.06a.25.25 0 00-.354 0L10.811 3.75l1.439 1.44 1.263-1.263a.25.25 0 000-.354l-1.086-1.086zM11.189 6.25L9.75 4.81l-6.286 6.287a.25.25 0 00-.064.108l-.558 1.953 1.953-.558a.249.249 0 00.108-.064l6.286-6.286z"/></svg>
<svg class="a" style="left:1523px;top:509px" width="16" height="16" viewBox="0 0 16 16" ><path fill="#57606a" fill-rule="evenodd" d="M6.5 1.75a.25.25 0 01.25-.25h2.5a.25.25 0 01.25.25V3h-3V1.75zm4.5 0V3h2.25a.75.75 0 010 1.5H2.75a.75.75 0 010-1.5H5V1.75C5 .784 5.784 0 6.75 0h2.5C10.216 0 11 .784 11 1.75zM4.496 6.675a.75.75 0 10-1.492.15l.66 6.6A1.75 1.75 0 005.405 15h5.19c.9 0 1.652-.681 1.741-1.576l.66-6.6a.75.75 0 00-1.492-.149l-.66 6.6a.25.25 0 01-.249.225h-5.19a.25.25 0 01-.249-.225l-.66-6.6z"/></svg>
<div class="ln" style="left:337.500px;top:541.8px">1</div>
<div class="cl c" style="left:397.500px;top:541.8px">#!/usr/bin/env python3</div>
<div class="ln" style="left:337.500px;top:561.8px">2</div>
<div class="cl c" style="left:397.500px;top:561.8px"># -*- coding: utf-8 -*-</div>
<div class="ln" style="left:337.500px;top:581.8px">3</div>
<div class="cl s" style="left:397.500px;top:581.8px">&quot;&quot;&quot;ROS <span class="h">의</span> <span class="h">컴퓨터</span> <span class="h">비전작업을</span> <span class="h">확장한</span> Segmentation <span class="h">작업입니다</span>.</div>
<div class="ln" style="left:337.500px;top:601.8px">4</div>
<div class="cl s" style="left:397.500px;top:601.8px">TensorFlow Savedmodel <span class="h">파일을</span> <span class="h">불러와서</span> segmentation <span class="h">을</span> <span class="h">수행하는</span> <span class="h">노드의</span> <span class="h">수명</span> <span class="h">주기를</span> <span class="h">관리합니다</span>.</div>
<div class="ln" style="left:337.500px;top:621.8px">5</div>
<div class="cl s" style="left:397.500px;top:621.8px"><span class="h">이</span> <span class="h">파일에는</span> <span class="h">딥러닝</span> <span class="h">모델의</span> <span class="h">간단한</span> <span class="h">전처리</span> <span class="h">함수가</span> <span class="h">포함되어</span> <span class="h">있습니다</span>.</div>
<div class="ln" style="left:337.500px;top:641.8px">6</div>
<div class="cl s" style="left:397.500px;top:641.8px"><span class="h">이</span> <span class="h">파일에</span> <span class="h">다양한</span> tensorflow native <span class="h">함수가</span> <span class="h">추가되어야</span> <span class="h">할</span> <span class="h">수</span> <span class="h">있습니다</span>.</div>
<div class="ln" style="left:337.500px;top:661.8px">7</div>
<div class="cl s" style="left:397.500px;top:661.8px">&quot;&quot;&quot;</div>
<div class="ln" style="left:337.500px;top:681.8px">8</div>
<div class="ln" style="left:337.500px;top:701.8px">9</div>
<div class="cl c" style="left:397.500px;top:701.8px"># <span class="h">내장</span></div>
<div class="ln" style="left:337.500px;top:721.8px">10</div>
<div class="cl" style="left:397.500px;top:721.8px"><span class="k">import</span> os, sys</div>
<div class="ln" style="left:337.500px;top:741.8px">11</div>
<div class="cl" style="left:397.500px;top:741.8px"><span class="k">import</span> argparse</div>
<div class="ln" style="left:337.500px;top:761.8px">12</div>
<div class="cl" style="left:397.500px;top:761.8px"><span class="k">import</span> tracemalloc</div>
<div class="ln" style="left:337.500px;top:781.8px">13</div>
<div class="cl" style="left:397.500px;top:781.8px"><span class="k">import</span> time</div>
<div class="ln" style="left:337.500px;top:801.8px">14</div>
<div class="ln" style="left:337.500px;top:821.8px">15</div>
<div class="cl c" style="left:397.500px;top:821.8px"># <span class="h">서드파티</span></div>
<div class="ln" style="left:337.500px;top:841.8px">16</div>
<div class="cl" style="left:397.500px;top:841.8px"><span class="k">import</span> tensorflow <span class="k">as</span> tf</div>
<div class="ln" style="left:337.500px;top:861.8px">17</div>
<div class="cl" style="left:397.500px;top:861.8px"><span class="k">import</span> numpy <span class="k">as</span> np</div>
<div class="ln" style="left:337.500px;top:881.8px">18</div>
<div class="cl" style="left:397.500px;top:881.8px"><span class="k">import</span> cv_bridge</div>
<div class="ln" style="left:337.500px;top:901.8px">19</div>
<div class="ln" style="left:337.500px;top:921.8px">20</div>
<div class="cl c" style="left:397.500px;top:921.8px">## ROS</div>
<div class="ln" style="left:337.500px;top:941.8px">21</div>
<div class="cl" style="left:397.500px;top:941.8px"><span class="k">import</span> rospy</div>
<div class="ln" style="left:337.500px;top:961.8px">22</div>
<div class="cl" style="left:397.500px;top:961.8px"><span class="k">import</span> rosnode</div>
<div class="ln" style="left:337.500px;top:981.8px">23</div>
<div class="cl" style="left:397.500px;top:981.8px"><span class="k">import</span> message_filters</div>
<div class="ln" style="left:337.500px;top:1001.8px">24</div>
<div class="cl" style="left:397.500px;top:1001.8px"><span class="k">from</span> sensor_msgs.msg <span class="k">import</span> <span class="v">Image</span>, <span class="v">CameraInfo</span></div>
<div class="ln" style="left:337.500px;top:1021.8px">25</div>
<div class="ln" style="left:337.500px;top:1041.8px">26</div>
<div class="cl c" style="left:397.500px;top:1041.8px"># <span class="h">뉴돌프</span></div>
<div class="ln" style="left:337.500px;top:1061.8px">27</div>
<div class="cl" style="left:397.500px;top:1061.8px"><span class="k">from</span> newdolph.core.streamer.base <span class="k">import</span> <span class="v">VisionStreamer</span></div>
<div class="ln" style="left:337.500px;top:1081.8px">28</div>
<div class="cl" style="left:397.500px;top:1081.8px"><span class="k">from</span> newdolph.core.meta.model <span class="k">import</span> <span class="v">ModelMetaDataTool</span></div>
<div class="ln" style="left:337.500px;top:1101.8px">29</div>
<div class="cl" style="left:397.500px;top:1101.8px"><span class="k">from</span> newdolph.core.meta.model <span class="k">import</span> <span class="v">SemanticSegmentationSingleModelMetaData</span>, <span class="v">ClassNotFoundError</span></div>
<div class="ln" style="left:337.500px;top:1121.8px">30</div>
<div class="cl" style="left:397.500px;top:1121.8px"><span class="k">from</span> newdolph.core.meta.structure <span class="k">import</span> <span class="v">SemanticSegmentationSingleClassMetaData</span></div>
<svg class="a" style="left:370px;top:528px" width="626" height="166" viewBox="0 0 626 166"><rect x="7.750" y="7.700" width="609" height="150" rx="17" ry="17" fill="none" stroke="#e95af0" stroke-width="4.600"/></svg>
<div class="a" style="left:1833px;top:117px;width:15px;height:1016px;background:#fafafa;border-left:1px solid #e8e8e8;"></div>
<div class="a" style="left:1837px;top:119.5px;width:8px;height:98px;background:#c1c1c1;border-radius:4px;"></div>
</div></div>
</body></html>
